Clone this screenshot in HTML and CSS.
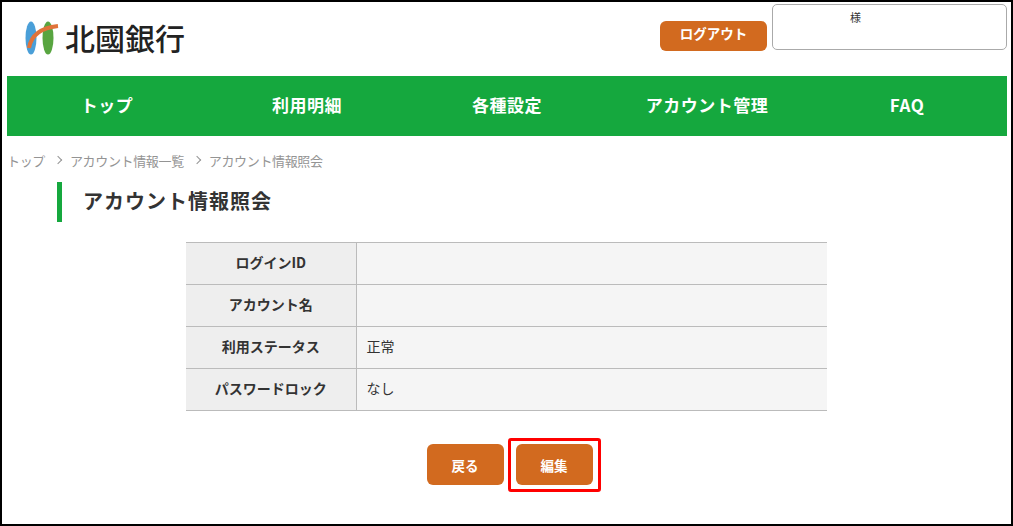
FILE: index.html
```html
<!DOCTYPE html>
<html lang="ja">
<head>
    <meta charset="UTF-8">
    <meta name="viewport" content="width=device-width, initial-scale=1.0">
    <title>アカウント情報照会</title>
    <link rel="stylesheet" href="styles.css">
</head>
<body>

<div class="container">
    <div class="header">
        <div class="logo">
            <svg class="logo-mark" width="36" height="36" viewBox="0 0 36 36">
                <ellipse cx="6" cy="19" rx="5.5" ry="16.5" fill="#4a9fd8"/>
                <ellipse cx="23" cy="19" rx="5.5" ry="16.5" fill="#58a540"/>
                <path d="M4 29 C6 17 14 9 33 7" fill="none" stroke="#e0733a" stroke-width="4"/>
            </svg>
            <span class="logo-name">北國銀行</span>
        </div>
        <div class="header-right">
            <a class="logout-btn">ログアウト</a>
            <div class="user-box">様</div>
        </div>
    </div>

    <div class="nav">
        <a>トップ</a>
        <a>利用明細</a>
        <a>各種設定</a>
        <a>アカウント管理</a>
        <a>FAQ</a>
    </div>

    <div class="breadcrumb">
        <span>トップ</span>
        <i class="crumb-arrow"></i>
        <span>アカウント情報一覧</span>
        <i class="crumb-arrow"></i>
        <span>アカウント情報照会</span>
    </div>

    <h1>アカウント情報照会</h1>

    <table class="info-table">
        <tr><th>ログインID</th><td></td></tr>
        <tr><th>アカウント名</th><td></td></tr>
        <tr><th>利用ステータス</th><td>正常</td></tr>
        <tr><th>パスワードロック</th><td>なし</td></tr>
    </table>

    <div class="button-container">
        <button class="action-btn">戻る</button>
        <div class="marked">
            <button class="action-btn">編集</button>
        </div>
    </div>
</div>

</body>
</html>
```

FILE: styles.css
```css
* {
    box-sizing: border-box;
}
html, body {
    margin: 0;
    padding: 0;
}
body {
    font-family: 'Noto Sans CJK JP', 'Noto Sans', sans-serif;
    background-color: #fff;
    color: #333;
}
.container {
    height: 526px;
    border: 2px solid #000;
    padding: 2px 4px 0 5px;
    overflow: hidden;
}
.header {
    display: flex;
    justify-content: space-between;
    height: 72px;
}
.logo {
    display: flex;
    align-items: center;
    gap: 4px;
    padding: 0 0 6px 18px;
}
.logo-name {
    font-size: 30px;
    font-weight: 500;
    line-height: 1;
    color: #222;
}
.header-right {
    display: flex;
    align-items: flex-start;
    gap: 5px;
}
.logout-btn {
    display: block;
    width: 107px;
    height: 30px;
    margin-top: 17px;
    line-height: 25px;
    text-align: center;
    font-size: 13.5px;
    font-weight: 700;
    color: #fff;
    background-color: #d26a1f;
    border-radius: 6px;
}
.user-box {
    width: 235px;
    height: 46px;
    padding: 5px 0 0 77px;
    font-size: 11px;
    line-height: 15px;
    border: 1px solid #aaa;
    border-radius: 5px;
}
.nav {
    display: grid;
    grid-template-columns: repeat(5, 200px);
    height: 60px;
    background-color: #15a83e;
}
.nav a {
    line-height: 57px;
    text-align: center;
    font-size: 17px;
    font-weight: 700;
    letter-spacing: 0.5px;
    color: #fff;
}
.breadcrumb {
    display: flex;
    align-items: center;
    height: 20px;
    margin-top: 14px;
    font-size: 13px;
    letter-spacing: -0.35px;
    color: #949494;
}
.crumb-arrow {
    width: 6px;
    height: 6px;
    margin: 0 9px 0 10px;
    border-top: 1px solid #949494;
    border-right: 1px solid #949494;
    transform: rotate(45deg);
}
h1 {
    height: 40px;
    margin: 12px 0 20px 50px;
    padding-left: 21px;
    font-size: 20px;
    font-weight: 700;
    line-height: 37px;
    letter-spacing: 1px;
    border-left: 5px solid #15a83e;
}
.info-table {
    width: 641px;
    margin: 0 0 0 179px;
    border-collapse: collapse;
    font-size: 14px;
}
.info-table th, .info-table td {
    height: 42px;
    padding: 0 10px 4px;
    border-top: 1px solid #bbb;
    border-bottom: 1px solid #bbb;
}
.info-table th {
    width: 170px;
    font-weight: 700;
    text-align: center;
    background-color: #eee;
    border-right: 1px solid #bbb;
}
.info-table td {
    background-color: #f5f5f5;
}
.button-container {
    display: flex;
    justify-content: center;
    gap: 12px;
    margin-top: 33px;
    padding-left: 5px;
}
.action-btn {
    display: block;
    width: 77px;
    height: 41px;
    padding: 0;
    font-family: inherit;
    font-size: 13.5px;
    font-weight: 700;
    color: #fff;
    background-color: #d26a1f;
    border: none;
    border-radius: 6px;
}
.marked {
    position: relative;
}
/* red annotation box round the edit button */
.marked::after {
    content: "";
    position: absolute;
    top: -6px;
    bottom: -7px;
    left: -8px;
    right: -8px;
    border: 3px solid #f00;
    border-radius: 3px;
}
```
